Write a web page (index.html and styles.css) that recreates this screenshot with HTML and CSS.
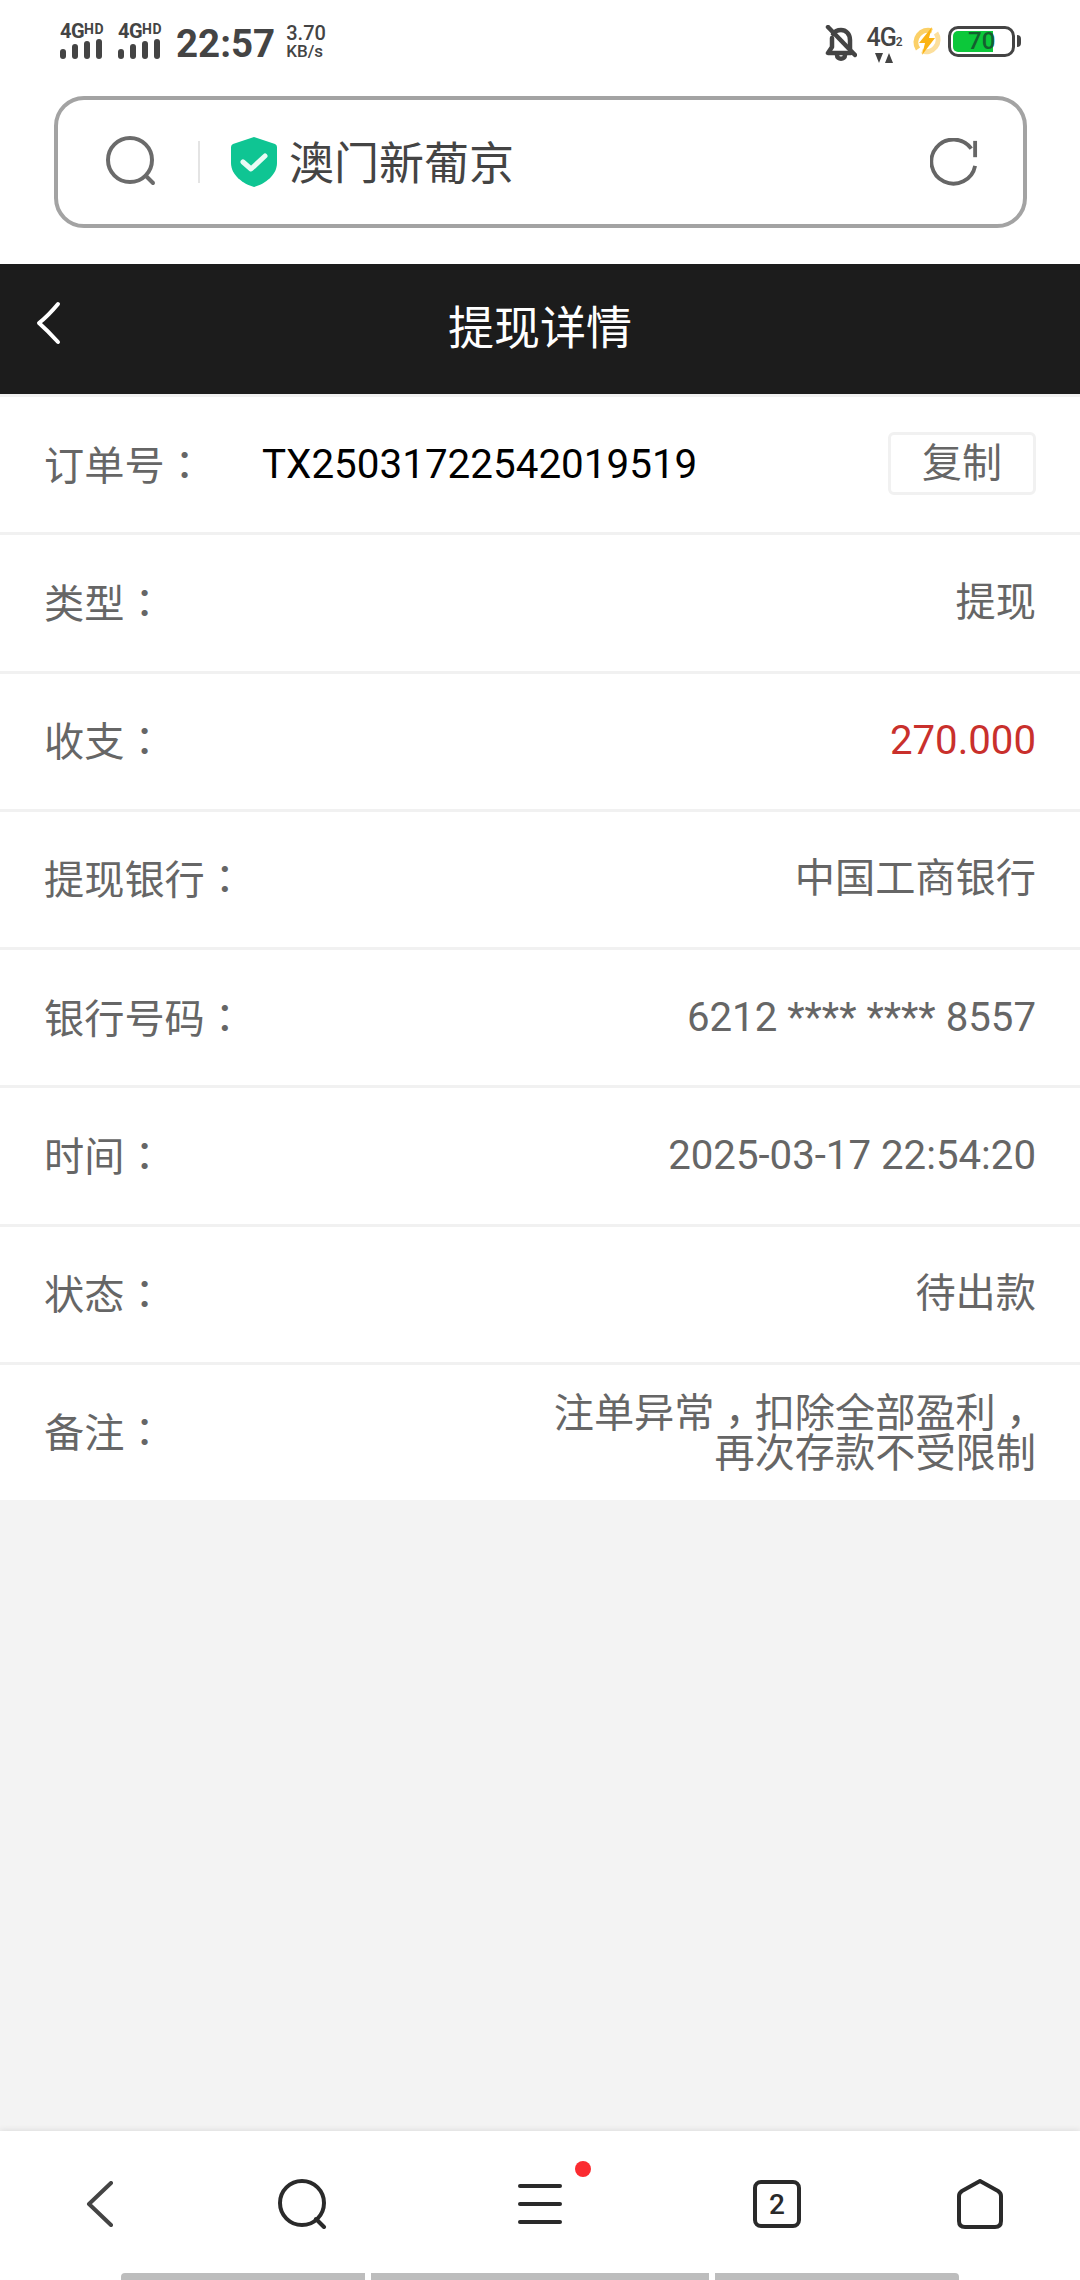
FILE: index.html
```html
<!DOCTYPE html>
<html lang="zh-CN">

<head>
    <meta charset="utf-8">
    <meta name="viewport" content="width=device-width, initial-scale=1.0">
    <title>提现详情</title>
    <link rel="stylesheet" href="styles.css">
</head>

<body>
    <div class="top-area">
        <!-- Phone status bar -->
        <div class="status-bar">
            <div class="status-left">
                <div class="signal">
                    <div class="signal-label">4G<small>HD</small></div>
                    <div class="signal-bars"><i class="b1"></i><i class="b2"></i><i class="b3"></i><i class="b4"></i></div>
                </div>
                <div class="signal">
                    <div class="signal-label">4G<small>HD</small></div>
                    <div class="signal-bars"><i class="b1"></i><i class="b2"></i><i class="b3"></i><i class="b4"></i></div>
                </div>
                <div class="clock">22:57</div>
                <div class="speed"><span>3.70</span><span class="speed-unit">KB/s</span></div>
            </div>
            <div class="status-right">
                <svg class="bell" width="32" height="36" viewBox="0 0 32 36" fill="none" stroke="#444" stroke-width="4.5" stroke-linecap="round" stroke-linejoin="round">
                    <path d="M8 9 C10 6 13 5 16 5 C21 5 25 9 25 15 V24" />
                    <path d="M7 13 V22 L3 28 H26" />
                    <path d="M12 30 C12 35 20 35 20 30" />
                    <path d="M3 2 L30 30" />
                </svg>
                <div class="net">
                    <div class="net-label">4G<small>2</small></div>
                    <svg class="net-arrows" width="18" height="10" viewBox="0 0 18 10" fill="#444">
                        <path d="M0 0 H8 L4 10 Z" />
                        <path d="M10 10 H18 L14 0 Z" />
                    </svg>
                </div>
                <svg class="charge" width="30" height="32" viewBox="0 0 30 32" fill="none">
                    <path d="M20 6 A12 12 0 0 0 6 24" stroke="#fbd067" stroke-width="5" />
                    <path d="M10 26 A12 12 0 0 0 24 8" stroke="#fcdf9c" stroke-width="5" />
                    <path d="M20 2 L7 18 H13 L10 30 L23 13 H17 Z" fill="#fbb313" />
                </svg>
                <div class="battery">
                    <div class="battery-box">
                        <div class="battery-fill" style="width: 40px"></div>
                        <span class="battery-num">70</span>
                    </div>
                    <div class="battery-tip"></div>
                </div>
            </div>
        </div>

        <!-- Browser address bar -->
        <div class="address-bar">
            <svg class="addr-search" width="52" height="52" viewBox="0 0 52 52" fill="none" stroke="#6b6b6b" stroke-width="4" stroke-linecap="round">
                <circle cx="25" cy="24" r="22" />
                <path d="M41 40 L48 47" />
            </svg>
            <div class="addr-divider"></div>
            <svg class="shield" width="46" height="50" viewBox="0 0 46 50">
                <path d="M23 0 L44 7 Q46 8 46 10 V26 C46 38 34 47 23 50 C12 47 0 38 0 26 V10 Q0 8 2 7 Z" fill="#0fc593" />
                <path d="M12 25 L20 32 L34 19" fill="none" stroke="#e9fbf5" stroke-width="5" stroke-linecap="round" stroke-linejoin="round" />
            </svg>
            <div class="addr-title">澳门新葡京</div>
            <svg class="addr-reload" width="48" height="48" viewBox="0 0 50 50" fill="none" stroke="#666" stroke-width="4">
                <path d="M47 29 A23 23 0 1 1 43 11" />
                <path d="M47 3 V20" />
            </svg>
        </div>
    </div>

    <!-- Page header -->
    <div class="page-header">
        <svg class="header-back" width="28" height="44" viewBox="0 0 28 44" fill="none" stroke="#fff" stroke-width="4" stroke-linecap="round" stroke-linejoin="round">
            <path d="M24 3 Q14 15 5 22 Q14 30 24 41" />
        </svg>
        <div class="header-title">提现详情</div>
    </div>

    <div class="detail-list">
        <div class="row">
            <div class="row-label order-label">订单号<span class="punct" lang="zh-TW">：</span></div>
            <div class="order-no">TX25031722542019519</div>
            <div class="copy-btn">复制</div>
        </div>
        <div class="row">
            <div class="row-label">类型<span class="punct" lang="zh-TW">：</span></div>
            <div class="row-value">提现</div>
        </div>
        <div class="row">
            <div class="row-label">收支<span class="punct" lang="zh-TW">：</span></div>
            <div class="row-value amount">270.000</div>
        </div>
        <div class="row">
            <div class="row-label">提现银行<span class="punct" lang="zh-TW">：</span></div>
            <div class="row-value">中国工商银行</div>
        </div>
        <div class="row">
            <div class="row-label">银行号码<span class="punct" lang="zh-TW">：</span></div>
            <div class="row-value">6212 **** **** 8557</div>
        </div>
        <div class="row">
            <div class="row-label">时间<span class="punct" lang="zh-TW">：</span></div>
            <div class="row-value">2025-03-17 22:54:20</div>
        </div>
        <div class="row">
            <div class="row-label">状态<span class="punct" lang="zh-TW">：</span></div>
            <div class="row-value">待出款</div>
        </div>
        <div class="row">
            <div class="row-label">备注<span class="punct" lang="zh-TW">：</span></div>
            <div class="row-value note">注单异常<span class="punct comma" lang="zh-TW">，</span>扣除全部盈利<span class="punct comma" lang="zh-TW">，</span>再次存款不受限制</div>
        </div>
    </div>

    <div class="spacer"></div>

    <!-- Browser bottom bar -->
    <div class="bottom-nav">
        <div class="nav-icons">
            <div class="nav-item">
                <svg width="28" height="46" viewBox="0 0 28 46" fill="none" stroke="#444" stroke-width="4" stroke-linecap="round" stroke-linejoin="round">
                    <path d="M25 2 L3 23 L25 44" />
                </svg>
            </div>
            <div class="nav-item">
                <svg width="50" height="50" viewBox="0 0 50 50" fill="none" stroke="#2a2a2a" stroke-width="4" stroke-linecap="round">
                    <circle cx="24" cy="24" r="22" />
                    <path d="M38 40 L46 48" />
                </svg>
            </div>
            <div class="nav-item">
                <div class="menu-icon"><i></i><i></i><i></i></div>
                <div class="red-dot"></div>
            </div>
            <div class="nav-item">
                <div class="tabs-icon">2</div>
            </div>
            <div class="nav-item">
                <svg width="46" height="50" viewBox="0 0 46 50" fill="none" stroke="#2a2a2a" stroke-width="4" stroke-linejoin="round">
                    <path d="M23 2 L41 12 Q44 14 44 17 V42 Q44 48 38 48 H8 Q2 48 2 42 V17 Q2 14 5 12 Z" />
                </svg>
            </div>
        </div>
        <div class="gesture-bars"><i class="first"></i><i class="middle"></i><i class="last"></i></div>
    </div>
</body>

</html>
```

FILE: styles.css
```css
html,
body {
    margin: 0;
    height: 100%;
}

body {
    width: 1080px;
    height: 2280px;
    display: flex;
    flex-direction: column;
    background: #f3f3f3;
    font-family: Roboto, "Noto Sans CJK SC", sans-serif;
    color: #666;
    overflow: hidden;
}

.top-area {
    flex: none;
    background: #fff;
    padding-bottom: 36px;
}

/* status bar */
.status-bar {
    height: 96px;
    display: flex;
    justify-content: space-between;
    padding: 0 59px 0 60px;
    box-sizing: border-box;
    color: #444;
}

.status-left {
    display: flex;
    align-items: flex-start;
    padding-top: 21px;
}

.signal {
    width: 44px;
    margin-right: 14px;
}

.signal-label {
    font-size: 20px;
    line-height: 16px;
    font-weight: 700;
    letter-spacing: -0.5px;
    white-space: nowrap;
}

.signal-label small {
    font-size: 14px;
    letter-spacing: 0.5px;
    vertical-align: 4px;
}

.signal-bars {
    display: flex;
    align-items: flex-end;
    gap: 6px;
    height: 20px;
}

.signal-bars i {
    display: block;
    width: 6px;
    background: #444;
    border-radius: 3px;
}

.signal-bars .b1 {
    height: 10px;
}

.signal-bars .b2 {
    height: 15px;
}

.signal-bars .b3 {
    height: 18px;
}

.signal-bars .b4 {
    height: 20px;
}

.clock {
    font-size: 38.5px;
    line-height: 44px;
    font-weight: 700;
    margin: 1px 11px 0 0;
}

.speed {
    display: flex;
    flex-direction: column;
    font-size: 20px;
    line-height: 19px;
    font-weight: 500;
    margin-top: 3px;
}

.speed-unit {
    font-size: 17px;
    line-height: 17px;
}

.status-right {
    display: flex;
    align-items: flex-start;
    padding-top: 25px;
}

.bell {
    margin-right: 9px;
}

.net {
    width: 36px;
    margin-right: 10px;
    display: flex;
    flex-direction: column;
    align-items: center;
}

.net-label {
    font-size: 25px;
    line-height: 25px;
    font-weight: 500;
    letter-spacing: -1px;
    white-space: nowrap;
}

.net-label small {
    font-size: 12px;
}

.net-arrows {
    margin-top: -2px;
}

.charge {
    margin-right: 6px;
}

.battery {
    display: flex;
    align-items: center;
    height: 32px;
}

.battery-box {
    position: relative;
    width: 67px;
    height: 31px;
    box-sizing: border-box;
    border: 3px solid #444;
    border-radius: 10px;
    padding: 2px;
}

.battery-fill {
    height: 100%;
    background: #0cc83a;
    border-radius: 5px 0 0 5px;
}

.battery-num {
    position: absolute;
    left: 17px;
    top: 0;
    font-size: 24px;
    line-height: 25px;
    font-weight: 500;
    color: #14602f;
}

.battery-tip {
    width: 4px;
    height: 12px;
    margin-left: 2px;
    background: #444;
    border-radius: 0 4px 4px 0;
}

/* address bar */
.address-bar {
    height: 132px;
    box-sizing: border-box;
    margin: 0 53px 0 54px;
    border: 4px solid #a3a3a3;
    border-radius: 30px;
    display: flex;
    align-items: center;
    padding: 0 45px 0 47px;
}

.addr-search {
    flex: none;
}

.addr-divider {
    width: 2px;
    height: 42px;
    margin: 0 31px 0 41px;
    background: #e4e4e4;
}

.addr-title {
    font-size: 45px;
    line-height: 52px;
    color: #444;
    margin-left: 12px;
    padding-top: 5px;
    flex: 1;
}

/* header */
.page-header {
    position: relative;
    height: 130px;
    flex: none;
    background: #1c1c1c;
    display: flex;
    align-items: center;
    justify-content: center;
}

.header-back {
    position: absolute;
    left: 34px;
    top: 37px;
}

.header-title {
    font-size: 46px;
    line-height: 60px;
    color: #fff;
    padding-bottom: 3px;
}

/* rows */
.detail-list {
    flex: none;
}

.row {
    height: 138.25px;
    box-sizing: border-box;
    border-top: 3px solid #f1f1f1;
    background: #fff;
    padding: 0 44px;
    display: flex;
    align-items: center;
    justify-content: space-between;
    font-size: 40.2px;
    line-height: 48px;
}

.punct {
    font-family: "Noto Sans CJK TC", sans-serif;
}

/* comma sits on the baseline in the original */
.comma {
    position: relative;
    top: 9px;
}

.row-value {
    text-align: right;
}

.amount {
    color: #c9302c;
}

.note {
    width: 486px;
    line-height: 40px;
}

.order-label {
    width: 218px;
}

.order-no {
    flex: 1;
    color: #000;
    font-size: 40.4px;
}

.copy-btn {
    width: 148px;
    height: 63px;
    margin-top: -2px;
    box-sizing: border-box;
    border: 3px solid #f1f1f1;
    border-radius: 6px;
    display: flex;
    align-items: center;
    justify-content: center;
    font-size: 40px;
}

.spacer {
    flex: 1;
}

/* bottom bar */
.bottom-nav {
    height: 149px;
    flex: none;
    background: #fff;
    box-shadow: 0 -1px 6px rgba(0, 0, 0, 0.09);
    display: flex;
    flex-direction: column;
}

.nav-icons {
    flex: 1;
    padding-top: 4px;
    display: grid;
    grid-template-columns: 200px 206px 268px 206px 200px;
    align-items: center;
}

.nav-item {
    position: relative;
    display: flex;
    justify-content: center;
    align-items: center;
}

.menu-icon {
    width: 44px;
    display: flex;
    flex-direction: column;
    gap: 14px;
}

.menu-icon i {
    display: block;
    height: 4px;
    background: #2a2a2a;
    border-radius: 2px;
}

.red-dot {
    position: absolute;
    left: 169px;
    top: -23px;
    width: 16px;
    height: 16px;
    border-radius: 50%;
    background: #fb2b30;
}

.tabs-icon {
    width: 48px;
    height: 48px;
    box-sizing: border-box;
    border: 4px solid #2a2a2a;
    border-radius: 8px;
    display: flex;
    align-items: center;
    justify-content: center;
    font-size: 28px;
    font-weight: 500;
    color: #2a2a2a;
}

.gesture-bars {
    height: 7px;
    flex: none;
    display: flex;
    gap: 6px;
    padding-left: 121px;
}

.gesture-bars i {
    display: block;
    width: 244px;
    background: #bdbdbd;
}

.gesture-bars .first {
    border-radius: 4px 0 0 0;
}

.gesture-bars .middle {
    width: 338px;
}

.gesture-bars .last {
    border-radius: 0 4px 0 0;
}
```
